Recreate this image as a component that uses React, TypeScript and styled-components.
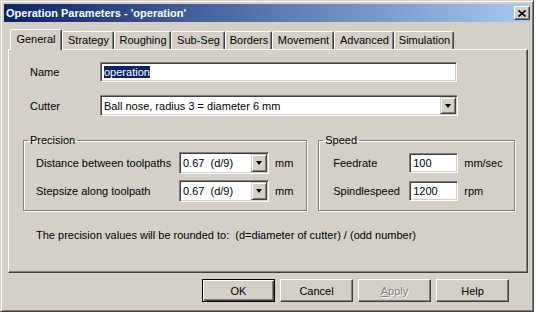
import React from 'react';
import styled, { createGlobalStyle } from 'styled-components';

const GlobalStyle = createGlobalStyle`
  html, body {
    margin: 0;
    padding: 0;
    background: #ffffff;
  }
  body {
    font-family: "Liberation Sans", Arial, sans-serif;
    font-size: 11px;
    color: #000;
  }
`;

const FACE = '#D4D0C8';

const Window = styled.div`
  width: 534px;
  height: 312px;
  box-sizing: border-box;
  background: ${FACE};
  border: 1px solid;
  border-color: ${FACE} #404040 #404040 ${FACE};
  box-shadow: inset 1px 1px 0 #fff, inset -1px -1px 0 #808080;
  padding: 3px;
  display: flex;
  flex-direction: column;
`;

const TitleBar = styled.div`
  height: 18px;
  display: flex;
  align-items: center;
  justify-content: space-between;
  padding: 0 0 0 2px;
  background: linear-gradient(to right, #0a246a, #a6caf0);
  color: #fff;
  font-weight: bold;
  font-size: 11px;
`;

const CloseButton = styled.div`
  width: 16px;
  height: 14px;
  box-sizing: border-box;
  background: ${FACE};
  border: 1px solid;
  border-color: #fff #404040 #404040 #fff;
  box-shadow: inset -1px -1px 0 #808080;
  display: flex;
  align-items: center;
  justify-content: center;
`;

const Client = styled.div`
  flex: 1;
  display: flex;
  flex-direction: column;
  padding: 7px 3px 0 4px;
`;

const TabStrip = styled.div`
  display: flex;
  align-items: flex-end;
  padding-left: 2px;
  height: 20px;
  position: relative;
  z-index: 1;
`;

const Tab = styled.div<{ $active?: boolean; $w: number }>`
  width: ${({ $w }) => $w}px;
  box-sizing: border-box;
  height: ${({ $active }) => ($active ? 21 : 18)}px;
  margin-bottom: ${({ $active }) => ($active ? -1 : 0)}px;
  background: ${FACE};
  border-top: 1px solid #fff;
  border-left: 1px solid #fff;
  border-right: 1px solid #404040;
  box-shadow: inset -1px 0 0 #808080;
  border-radius: 2px 2px 0 0;
  display: flex;
  justify-content: center;
  padding-top: ${({ $active }) => ($active ? 3 : 2)}px;
  padding-left: ${({ $active }) => ($active ? 0 : 1)}px;
  white-space: nowrap;
`;

const Panel = styled.div`
  width: 520px;
  height: 224px;
  box-sizing: border-box;
  border: 1px solid;
  border-color: #fff #404040 #404040 #fff;
  box-shadow: inset -1px -1px 0 #808080;
  padding: 12px 12px 0 13px;
  display: flex;
  flex-direction: column;
`;

const FieldRow = styled.div<{ $gap?: number }>`
  display: flex;
  align-items: center;
  padding-left: 8px;
  margin-top: ${({ $gap }) => $gap ?? 0}px;
`;

const RowLabel = styled.div<{ $w: number }>`
  width: ${({ $w }) => $w}px;
  flex-shrink: 0;
  white-space: nowrap;
`;

const Sunken = styled.div<{ $w: number; $h: number }>`
  width: ${({ $w }) => $w}px;
  height: ${({ $h }) => $h}px;
  box-sizing: border-box;
  background: #fff;
  border: 1px solid;
  border-color: #808080 #fff #fff #808080;
  box-shadow: inset 1px 1px 0 #404040, inset -1px -1px 0 ${FACE};
  display: flex;
  align-items: center;
  padding: 2px 2px 2px 3px;
  white-space: nowrap;
`;

const Selected = styled.span`
  background: #0a246a;
  color: #fff;
`;

const ComboText = styled.div`
  flex: 1;
  white-space: pre;
`;

const DropButton = styled.div`
  width: 16px;
  align-self: stretch;
  box-sizing: border-box;
  background: ${FACE};
  border: 1px solid;
  border-color: ${FACE} #404040 #404040 ${FACE};
  box-shadow: inset 1px 1px 0 #fff, inset -1px -1px 0 #808080;
  display: flex;
  align-items: center;
  justify-content: center;
  margin: -1px -1px -1px 0;
`;

const Arrow = styled.div`
  width: 0;
  height: 0;
  border-left: 3.5px solid transparent;
  border-right: 3.5px solid transparent;
  border-top: 4px solid #000;
`;

const Groups = styled.div`
  display: flex;
  gap: 11px;
  margin-top: 18px;
  padding-left: 1px;
`;

const GroupRow = styled.div<{ $pl: number }>`
  display: flex;
  align-items: center;
  height: 22px;
  padding-left: ${({ $pl }) => $pl}px;
`;

const GroupBox = styled.fieldset<{ $w: number }>`
  width: ${({ $w }) => $w}px;
  box-sizing: border-box;
  margin: 0;
  min-width: 0;
  border: 1px solid #808080;
  box-shadow: inset 1px 1px 0 #fff, 1px 1px 0 #fff;
  padding: 5px 0 8px 0;
  display: flex;
  flex-direction: column;
  gap: 6px;
`;

const Legend = styled.legend`
  margin-left: 4px;
  padding: 0 2px;
  line-height: 13px;
`;

const Unit = styled.div`
  margin-left: 6px;
`;

const Note = styled.div`
  margin-top: 18px;
  padding-left: 14px;
  white-space: pre;
`;

const ButtonBar = styled.div`
  display: flex;
  justify-content: flex-end;
  gap: 5px;
  padding: 6px 18px 0 0;
`;

const Button = styled.div<{ $default?: boolean; $disabled?: boolean }>`
  width: 73px;
  height: 23px;
  box-sizing: border-box;
  display: flex;
  align-items: center;
  justify-content: center;
  background: ${FACE};
  border: 1px solid;
  border-color: ${({ $default }) => ($default ? '#000' : '#fff #404040 #404040 #fff')};
  box-shadow: ${({ $default }) =>
    $default
      ? 'inset 1px 1px 0 #fff, inset -1px -1px 0 #404040, inset -2px -2px 0 #808080'
      : 'inset -1px -1px 0 #808080'};
  color: ${({ $disabled }) => ($disabled ? '#808080' : '#000')};
  text-shadow: ${({ $disabled }) => ($disabled ? '1px 1px 0 #fff' : 'none')};
`;

const tabs = [
  { label: 'General', w: 52 },
  { label: 'Strategy', w: 52 },
  { label: 'Roughing', w: 57 },
  { label: 'Sub-Seg', w: 54 },
  { label: 'Borders', w: 47 },
  { label: 'Movement', w: 62 },
  { label: 'Advanced', w: 60 },
  { label: 'Simulation', w: 60 },
];

const Combo = ({ w, h, value }: { w: number; h: number; value: string }) => (
  <Sunken $w={w} $h={h}>
    <ComboText>{value}</ComboText>
    <DropButton>
      <Arrow />
    </DropButton>
  </Sunken>
);

export default function App() {
  return (
    <>
      <GlobalStyle />
      <Window>
        <TitleBar>
          <span>Operation Parameters - 'operation'</span>
          <CloseButton>
            <svg width="8" height="7" viewBox="0 0 8 7">
              <path d="M0.5 0.5 L7.5 6.5 M7.5 0.5 L0.5 6.5" stroke="#000" strokeWidth="1.6" />
            </svg>
          </CloseButton>
        </TitleBar>
        <Client>
          <TabStrip>
            {tabs.map((t, i) => (
              <Tab key={t.label} $w={t.w} $active={i === 0}>
                {t.label}
              </Tab>
            ))}
          </TabStrip>
          <Panel>
            <FieldRow>
              <RowLabel $w={70}>Name</RowLabel>
              <Sunken $w={357} $h={20}>
                <Selected>operation</Selected>
              </Sunken>
            </FieldRow>
            <FieldRow $gap={13}>
              <RowLabel $w={70}>Cutter</RowLabel>
              <Combo w={358} h={21} value="Ball nose, radius 3 = diameter 6 mm" />
            </FieldRow>
            <Groups>
              <GroupBox $w={286}>
                <Legend>Precision</Legend>
                <GroupRow $pl={12}>
                  <RowLabel $w={143}>Distance between toolpaths</RowLabel>
                  <Combo w={90} h={22} value="0.67  (d/9)" />
                  <Unit>mm</Unit>
                </GroupRow>
                <GroupRow $pl={12}>
                  <RowLabel $w={143}>Stepsize along toolpath</RowLabel>
                  <Combo w={90} h={22} value="0.67  (d/9)" />
                  <Unit>mm</Unit>
                </GroupRow>
              </GroupBox>
              <GroupBox $w={198}>
                <Legend>Speed</Legend>
                <GroupRow $pl={14}>
                  <RowLabel $w={76}>Feedrate</RowLabel>
                  <Sunken $w={49} $h={20}>100</Sunken>
                  <Unit>mm/sec</Unit>
                </GroupRow>
                <GroupRow $pl={14}>
                  <RowLabel $w={76}>Spindlespeed</RowLabel>
                  <Sunken $w={49} $h={20}>1200</Sunken>
                  <Unit>rpm</Unit>
                </GroupRow>
              </GroupBox>
            </Groups>
            <Note>The precision values will be rounded to:  (d=diameter of cutter) / (odd number)</Note>
          </Panel>
          <ButtonBar>
            <Button $default>OK</Button>
            <Button>Cancel</Button>
            <Button $disabled>
              <span>
                <u>A</u>pply
              </span>
            </Button>
            <Button>Help</Button>
          </ButtonBar>
        </Client>
      </Window>
    </>
  );
}
